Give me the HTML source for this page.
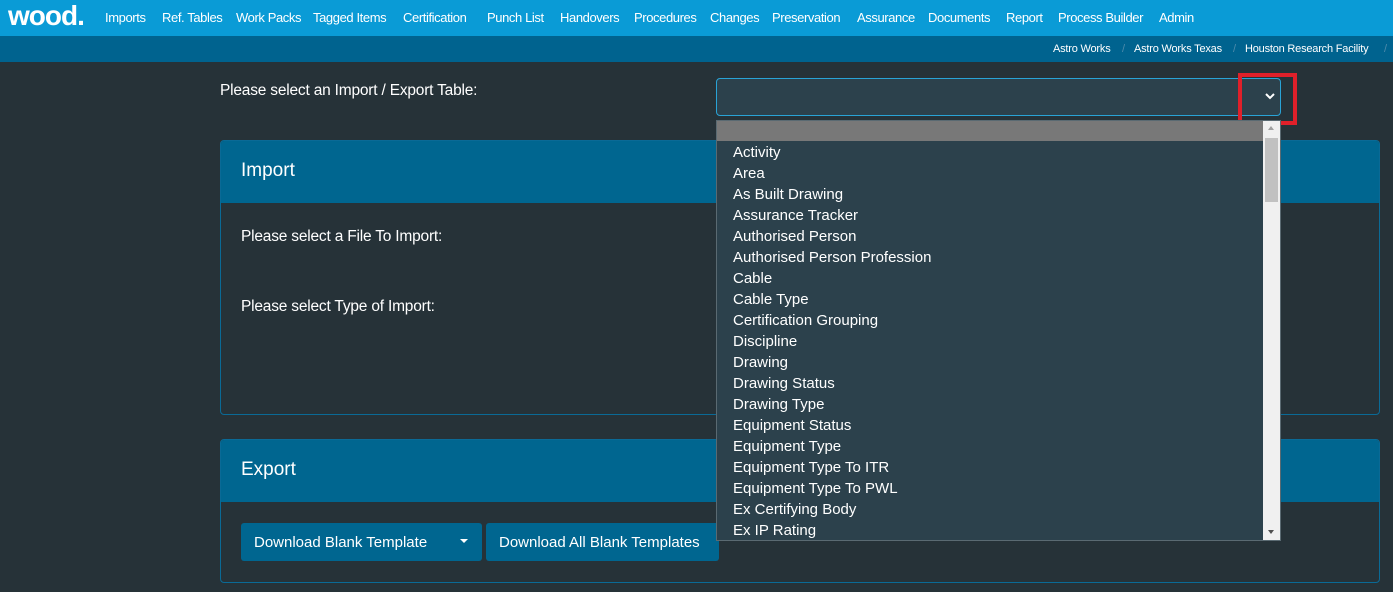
<!DOCTYPE html>
<html><head><meta charset="utf-8"><style>
*{margin:0;padding:0;box-sizing:border-box}
body{width:1393px;height:592px;overflow:hidden;background:#263238;font-family:"Liberation Sans",sans-serif;color:#fff;position:relative}
.a{position:absolute;white-space:nowrap}
#nav{position:absolute;left:0;top:0;width:1393px;height:36px;background:#0a9bd6}
#nav span{position:absolute;top:10px;font-size:13px;letter-spacing:-0.4px}
#sub{position:absolute;left:0;top:36px;width:1393px;height:26px;background:#00638f}
#sub span{position:absolute;top:7px;font-size:11px;letter-spacing:-0.2px}
.lbl{font-family:"Liberation Sans",sans-serif;font-size:15.5px;letter-spacing:-0.2px}
.panel{position:absolute;left:220px;width:1160px;border:1px solid #0a6a96;border-radius:4px;overflow:hidden}
.ph{background:#006690;height:62px;padding:19px 20px;font-size:19px}
.btn{position:absolute;background:#006690;border-radius:3px;height:38px;font-size:15px;padding:11px 13px;white-space:nowrap}
#list{position:absolute;left:716px;top:120px;width:565px;height:421px;background:#2c414c;border:1px solid #5a6a72;overflow:hidden}
#list div{height:21px;font-size:15px;padding-left:16px;line-height:23px}
</style></head><body>
<div id="nav">
<span style="left:8px;top:0;font-size:28px;font-weight:bold;letter-spacing:-1px">wood.</span>
<span style="left:105px">Imports</span><span style="left:162px">Ref. Tables</span><span style="left:236px">Work Packs</span><span style="left:313px">Tagged Items</span><span style="left:403px">Certification</span><span style="left:487px">Punch List</span><span style="left:560px">Handovers</span><span style="left:634px">Procedures</span><span style="left:710px">Changes</span><span style="left:772px">Preservation</span><span style="left:857px">Assurance</span><span style="left:928px">Documents</span><span style="left:1006px">Report</span><span style="left:1058px">Process Builder</span><span style="left:1159px">Admin</span>
</div>
<div id="sub"><span style="left:1053px">Astro Works</span><span style="left:1122px;color:#4d8bab">/</span><span style="left:1134px">Astro Works Texas</span><span style="left:1233px;color:#4d8bab">/</span><span style="left:1245px">Houston Research Facility</span><span style="left:1384px;color:#4d8bab">/</span></div>
<div class="a lbl" style="left:220px;top:82px">Please select an Import / Export Table:</div>
<div class="a" style="left:716px;top:78px;width:565px;height:38px;background:#2c414c;border:1px solid #29a3d6;border-radius:4px"></div>
<svg class="a" style="left:1264px;top:91px" width="12" height="10"><path d="M2 3 L6 7 L10 3" stroke="#fff" stroke-width="2" fill="none"/></svg>
<div class="a" style="left:1238px;top:73px;width:59px;height:52px;border:4px solid #e0202a"></div>
<div class="panel" style="top:140px;height:275px"><div class="ph">Import</div>
<div class="a lbl" style="left:20px;top:87px">Please select a File To Import:</div>
<div class="a lbl" style="left:20px;top:157px">Please select Type of Import:</div></div>
<div class="panel" style="top:439px;height:144px"><div class="ph">Export</div>
<div class="btn" style="left:20px;top:83px;width:241px">Download Blank Template<span style="position:absolute;left:219px;top:16px;border:4px solid transparent;border-top:4px solid #fff;border-bottom:0"></span></div>
<div class="btn" style="left:265px;top:83px;width:233px">Download All Blank Templates</div></div>
<div id="list">
<div style="background:#787878;height:20px"></div>
<div>Activity</div><div>Area</div><div>As Built Drawing</div><div>Assurance Tracker</div><div>Authorised Person</div><div>Authorised Person Profession</div><div>Cable</div><div>Cable Type</div><div>Certification Grouping</div><div>Discipline</div><div>Drawing</div><div>Drawing Status</div><div>Drawing Type</div><div>Equipment Status</div><div>Equipment Type</div><div>Equipment Type To ITR</div><div>Equipment Type To PWL</div><div>Ex Certifying Body</div><div>Ex IP Rating</div>
<span class="a" style="left:546px;top:0;width:17px;height:419px;background:#f0f0f0"></span>
<span class="a" style="left:548px;top:17px;width:13px;height:64px;background:#c1c1c1"></span>
<span class="a" style="left:551px;top:5px;border:3px solid transparent;border-bottom:4px solid #a0a0a0;border-top:0"></span>
<span class="a" style="left:551px;top:409px;border:3px solid transparent;border-top:4px solid #505050;border-bottom:0"></span>
</div>
</body></html>
